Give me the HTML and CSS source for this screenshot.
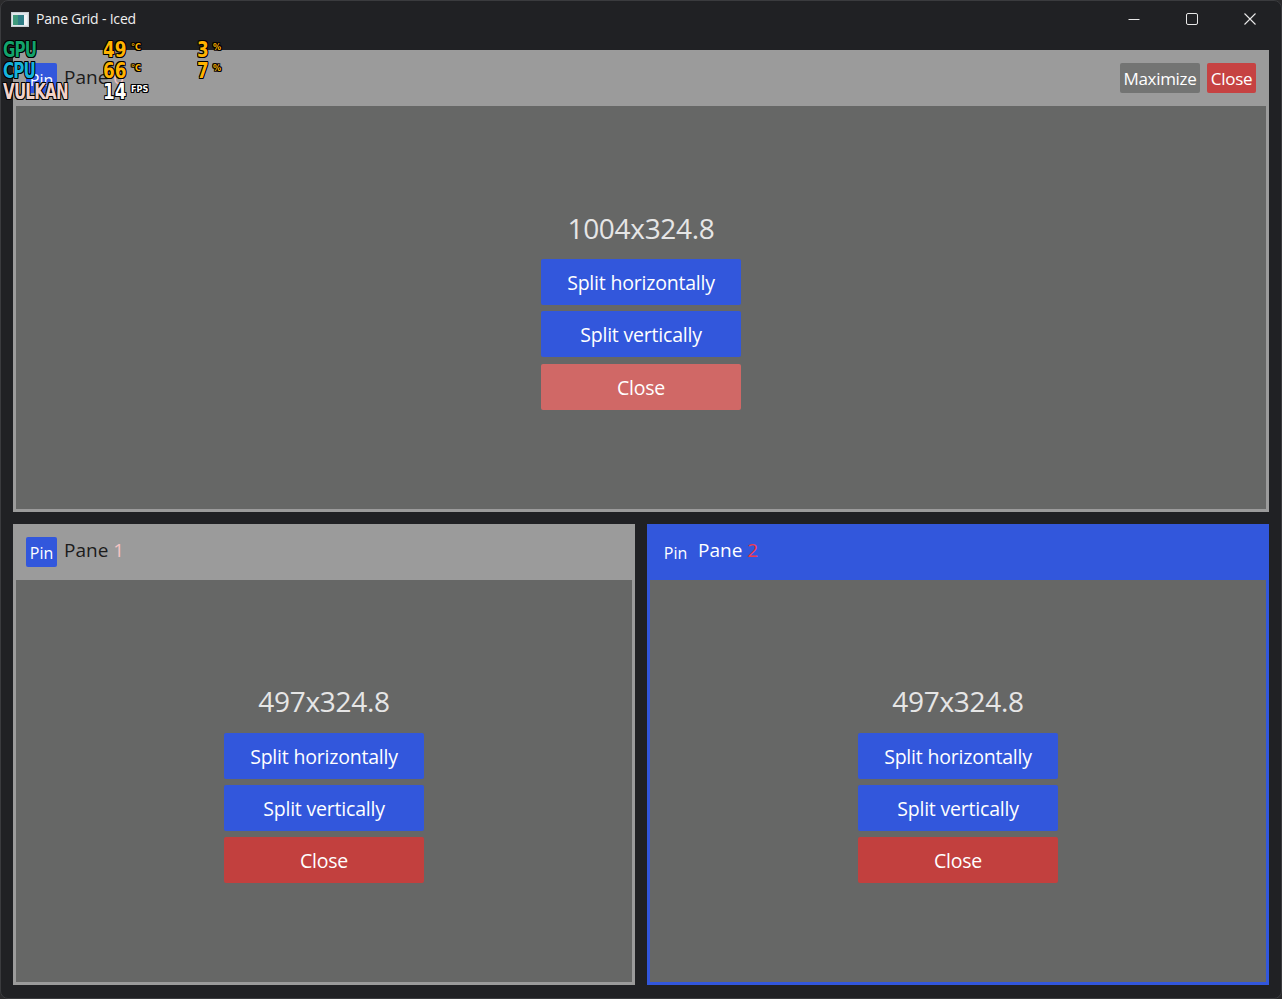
FILE: index.html
```html
<!DOCTYPE html>
<html>
<head>
<meta charset="utf-8">
<title>Pane Grid - Iced</title>
<link rel="stylesheet" href="styles.css">
</head>
<body>
<div class="window">
  <div class="titlebar">
    <svg class="app-icon" width="18" height="15" viewBox="0 0 18 15">
      <rect x="0.5" y="0.5" width="17" height="14" fill="#dfe6ea" stroke="#c8cfd4"/>
      <rect x="2" y="3" width="11" height="10" fill="#2f7d86"/>
      <rect x="2" y="3" width="5" height="10" fill="#3f9a7c"/>
      <rect x="13" y="3" width="3" height="10" fill="#f2f5f7"/>
    </svg>
    <span class="win-title">Pane Grid - Iced</span>
    <div class="controls">
      <span class="ctl"><svg width="12" height="12" viewBox="0 0 12 12"><line x1="0.5" y1="6.5" x2="11.5" y2="6.5" stroke="#e8e8e8" stroke-width="1"/></svg></span>
      <span class="ctl"><svg width="12" height="12" viewBox="0 0 12 12"><rect x="0.5" y="0.5" width="11" height="11" rx="1.5" fill="none" stroke="#e8e8e8" stroke-width="1"/></svg></span>
      <span class="ctl"><svg width="12" height="12" viewBox="0 0 12 12"><path d="M0.5 0.5 L11.5 11.5 M11.5 0.5 L0.5 11.5" stroke="#e8e8e8" stroke-width="1.1"/></svg></span>
    </div>
  </div>

  <div class="grid">
    <section class="pane pane-top">
      <header class="pane-title">
        <span class="pin">Pin</span>
        <span class="pane-name">Pane <span class="num num-pink">0</span></span>
        <div class="title-actions">
          <span class="tbtn tbtn-max">Maximize</span>
          <span class="tbtn tbtn-close">Close</span>
        </div>
      </header>
      <div class="pane-body">
        <div class="size">1004x324.8</div>
        <span class="act act-blue">Split horizontally</span>
        <span class="act act-blue">Split vertically</span>
        <span class="act act-close-light">Close</span>
      </div>
    </section>

    <section class="pane">
      <header class="pane-title">
        <span class="pin">Pin</span>
        <span class="pane-name">Pane <span class="num num-pink">1</span></span>
      </header>
      <div class="pane-body">
        <div class="size">497x324.8</div>
        <span class="act act-blue">Split horizontally</span>
        <span class="act act-blue">Split vertically</span>
        <span class="act act-close">Close</span>
      </div>
    </section>

    <section class="pane pane-focused">
      <header class="pane-title">
        <span class="pin pin-flat">Pin</span>
        <span class="pane-name">Pane <span class="num num-red">2</span></span>
      </header>
      <div class="pane-body">
        <div class="size">497x324.8</div>
        <span class="act act-blue">Split horizontally</span>
        <span class="act act-blue">Split vertically</span>
        <span class="act act-close">Close</span>
      </div>
    </section>
  </div>

  <div class="osd">
    <div class="osd-row">
      <span class="osd-label osd-gpu">GPU</span>
      <span class="osd-val">49</span><span class="osd-unit">°C</span>
      <span class="osd-val2">3</span><span class="osd-unit2">%</span>
    </div>
    <div class="osd-row">
      <span class="osd-label osd-cpu">CPU</span>
      <span class="osd-val">66</span><span class="osd-unit">°C</span>
      <span class="osd-val2">7</span><span class="osd-unit2">%</span>
    </div>
    <div class="osd-row">
      <span class="osd-label osd-vk">VULKAN</span>
      <span class="osd-val osd-white">14</span><span class="osd-unit osd-white">FPS</span>
    </div>
  </div>
</div>
</body>
</html>
```

FILE: styles.css
```css
* { box-sizing: border-box; }
html, body { margin: 0; padding: 0; }
body {
  width: 1282px;
  height: 999px;
  background: #2a2a2c;
  font-family: "Open Sans", "Noto Sans", sans-serif;
  overflow: hidden;
}
.window {
  position: relative;
  width: 1282px;
  height: 999px;
  background: #202124;
  border: 1px solid #3a3b3e;
  border-radius: 8px;
  display: flex;
  flex-direction: column;
  overflow: hidden;
}
.titlebar {
  height: 37px;
  flex: none;
  display: flex;
  align-items: center;
  padding-left: 10px;
  color: #f0f0f0;
}
.app-icon { display: block; margin-top: -1px; }
.win-title {
  margin-left: 7px;
  font-size: 14px;
  letter-spacing: -0.2px;
  margin-top: -2px;
}
.controls {
  margin-left: auto;
  display: flex;
  padding-right: 2px;
  margin-top: -2px;
}
.ctl {
  width: 58px;
  height: 30px;
  display: flex;
  align-items: center;
  justify-content: center;
}
.ctl svg { display: block; }

.grid {
  flex: 1;
  display: grid;
  grid-template-columns: 1fr 1fr;
  grid-template-rows: 1fr 1fr;
  gap: 12px;
  padding: 12px 12px 13px 12px;
}
.pane {
  display: flex;
  flex-direction: column;
  background: #9b9b9b;
  min-height: 0;
}
.pane-top { grid-column: 1 / 3; }
.pane-focused { background: #3257dc; }

.pane-title {
  height: 56px;
  flex: none;
  display: flex;
  align-items: center;
  padding: 0 13px;
}
.pin {
  width: 31px;
  height: 30px;
  background: #3257dc;
  border-radius: 2px;
  color: #ffffff;
  font-size: 16px;
  display: flex;
  align-items: center;
  justify-content: center;
  padding-top: 3px;
}
.pin-flat { background: transparent; }
.pane-name {
  margin-left: 7px;
  font-size: 19px;
  color: #1c1c1c;
  margin-top: -3px;
}
.pane-focused .pane-name { color: #ffffff; }
.num { margin-left: 0; }
.num-pink { color: #f4c4c4; }
.num-red { color: #f23a4c; }

.title-actions {
  margin-left: auto;
  display: flex;
  gap: 7px;
}
.tbtn {
  height: 30px;
  border-radius: 2px;
  color: #ffffff;
  font-size: 17px;
  display: flex;
  align-items: center;
  justify-content: center;
  letter-spacing: -0.3px;
}
.tbtn-max { width: 80px; background: #737473; }
.tbtn-close { width: 49px; background: #c64242; }

.pane-body {
  flex: 1;
  margin: 0 3px 3px 3px;
  background: #666766;
  display: flex;
  flex-direction: column;
  align-items: center;
  justify-content: center;
  gap: 6.25px;
}
.size {
  font-size: 28px;
  line-height: 46px;
  height: 48px;
  color: #e6e6e6;
  letter-spacing: -0.3px;
}
.act {
  width: 200px;
  height: 46px;
  border-radius: 2px;
  color: #ffffff;
  font-size: 19.5px;
  display: flex;
  align-items: center;
  justify-content: center;
  letter-spacing: -0.2px;
  padding-top: 1px;
}
.act-blue { background: #3257dc; }
.act-close { background: #c2403e; }
.act-close-light { background: #d06866; }

/* on-screen display overlay */
.osd {
  position: absolute;
  left: 2px;
  top: 38px;
  font-family: "DejaVu Sans Condensed", "DejaVu Sans", sans-serif;
  font-weight: bold;
}
.osd-row {
  display: flex;
  align-items: flex-end;
  height: 21px;
}
.osd-row span {
  display: inline-block;
  text-shadow: -1px 0 #000, 1px 0 #000, 0 -1px #000, 0 1px #000, 1px 1px #000, -1px -1px #000, 1px -1px #000, -1px 1px #000;
}
.osd-label {
  width: 100px;
  font-size: 22px;
  line-height: 20px;
  transform: scaleX(0.76);
  transform-origin: left bottom;
  letter-spacing: -1px;
}
.osd-gpu { color: #13a36c; }
.osd-cpu { color: #16b4dc; }
.osd-vk { color: #f2d2c8; }
.osd-val {
  width: 28px;
  font-size: 22px;
  line-height: 20px;
  color: #ffb300;
  transform: scaleX(0.85);
  transform-origin: left bottom;
}
.osd-unit {
  width: 66px;
  align-self: flex-start;
  font-size: 9px;
  line-height: 12px;
  margin-top: 2px;
  color: #ffb300;
}
.osd-val2 {
  width: 16px;
  font-size: 22px;
  line-height: 20px;
  color: #ffb300;
  transform: scaleX(0.85);
  transform-origin: left bottom;
}
.osd-unit2 {
  align-self: flex-start;
  font-size: 9px;
  line-height: 12px;
  margin-top: 2px;
  color: #ffb300;
}
.osd-white { color: #ffffff; }
```
